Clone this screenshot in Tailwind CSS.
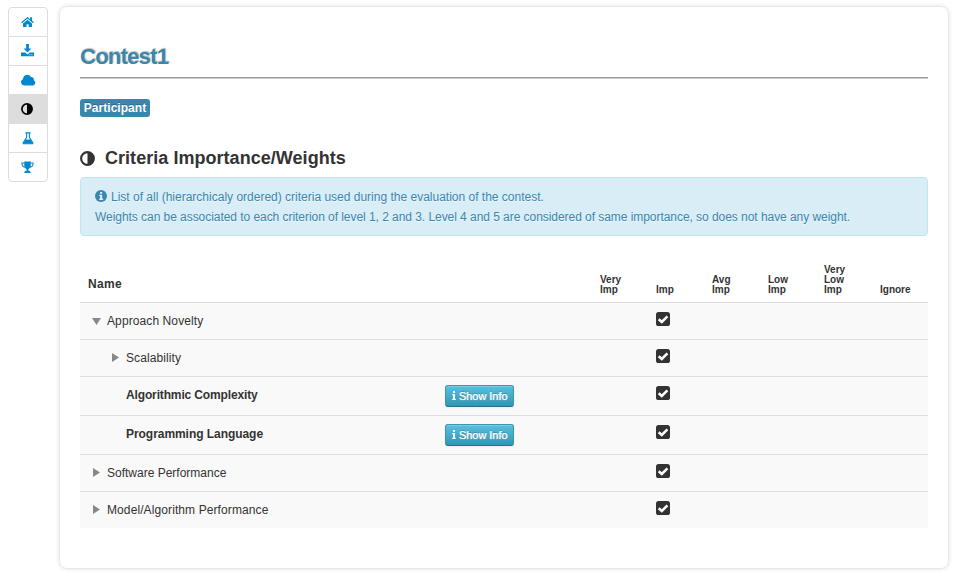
<!DOCTYPE html>
<html lang="en">
<head>
<meta charset="utf-8">
<title>Contest1</title>
<script src="https://cdn.jsdelivr.net/npm/@tailwindcss/browser@4"></script>
</head>
<body class="h-[576px] overflow-hidden bg-white font-['Liberation_Sans',Arial,sans-serif] text-[13px] leading-5 text-[#333]">
<svg class="hidden">
  <symbol id="home" viewBox="0 0 14 12"><path d="M7 3.6 11.8 7.6V11.5H8.2V8.3H6v3.2H2.2V7.6z"/><path d="M.6 6.9 7 1.5 13.4 6.9" fill="none" stroke="currentColor" stroke-width="1.4"/><path d="M9.9 1h2v4.6L9.9 4z"/></symbol>
  <symbol id="download" viewBox="0 0 14 13"><path d="M5.5 0h3v4.4h2.7L7 8.6 2.8 4.4h2.7z"/><path d="M0 8.4h4.6L7 10.6l2.4-2.2H14v3.8H0z"/><path d="M9 10.2h1v1H9zM11.3 10.2h1v1h-1z" fill="#fff"/></symbol>
  <symbol id="cloud" viewBox="0 0 15 12"><path d="M3.5 11.5A3.4 3.4 0 0 1 2.1 5 4.2 4.2 0 0 1 10 3a2.5 2.5 0 0 1 2.7 3.2 2.8 2.8 0 0 1-.6 5.3z"/></symbol>
  <symbol id="adjust" viewBox="0 0 12 12"><circle cx="6" cy="6" r="5.1" fill="none" stroke="currentColor" stroke-width="1.7"/><path d="M6 1a5 5 0 0 1 0 10z"/></symbol>
  <symbol id="beaker" viewBox="0 0 12 13"><path d="M3.4.9h5.2M4.6 1v4.3L1.3 10.6q-.6 1.2.6 1.2h8.2q1.2 0 .6-1.2L7.4 5.3V1" fill="none" stroke="currentColor" stroke-width="1.1"/><path d="M3.6 7.4h4.8l2.3 4H1.3z"/></symbol>
  <symbol id="trophy" viewBox="0 0 14 13"><path d="M3.5.6h7v3.6c0 2.2-1.5 3.2-2.5 4v1.6c1.4 0 2.4.7 2.4 1.6v.6H3.6v-.6c0-.9 1-1.6 2.4-1.6V8.2c-1-.8-2.5-1.8-2.5-4z"/><path d="M3.6 2H.9c0 2.6 1.4 4.1 4 4.1M10.4 2h2.7c0 2.6-1.4 4.1-4 4.1" fill="none" stroke="currentColor" stroke-width="1.1"/></symbol>
  <symbol id="info-sign" viewBox="0 0 12 12"><circle cx="6" cy="6" r="6"/><path d="M5 2h2.2v1.7H5zM4.2 4.7h3v3.8h.9V10H4.2V8.5H5V6.1h-.8z" fill="#d9edf7"/></symbol>
  <symbol id="info" viewBox="0 0 4 9"><path d="M1 0h2v2H1zM.3 3H3v4.7h.8V9H.2V7.7H1V4.3H.3z"/></symbol>
  <symbol id="check" viewBox="0 0 14 14"><rect width="14" height="14" rx="2.6"/><path d="M2.7 7.2 5.8 10 11.4 4.4" fill="none" stroke="#fff" stroke-width="2.5"/></symbol>
</svg>
<div class="flex items-start pl-2">
  <nav class="mt-[7px] flex h-[175px] w-10 flex-col divide-y divide-[#ddd] rounded border border-[#ddd] text-[#0088cc]">
    <a class="flex h-[29px] items-center justify-center pr-px"><svg class="h-3 w-[13px] fill-current"><use href="#home"/></svg></a>
    <a class="flex h-[29px] items-center justify-center pr-px pb-px"><svg class="h-[13px] w-[13px] fill-current" viewBox="0 0 14 13" preserveAspectRatio="none"><use href="#download" width="14" height="13"/></svg></a>
    <a class="flex h-[29px] items-center justify-center"><svg class="h-3 w-[15px] fill-current"><use href="#cloud"/></svg></a>
    <a class="flex h-[29px] items-center justify-center bg-[#ddd] pr-0.5 text-black"><svg class="size-3 fill-current"><use href="#adjust"/></svg></a>
    <a class="flex h-[29px] items-center justify-center"><svg class="h-[13px] w-3 fill-current"><use href="#beaker"/></svg></a>
    <a class="flex h-[28px] items-center justify-center pr-px"><svg class="h-[13px] w-[13px] fill-current" viewBox="0 0 14 13" preserveAspectRatio="none"><use href="#trophy" width="14" height="13"/></svg></a>
  </nav>
  <main class="mt-1.5 ml-[11px] h-[563px] w-[890px] rounded-lg border border-[#e8e8e8] px-5 shadow-[0_0_4px_rgba(0,0,0,0.12)]">
    <h1 class="mt-[34px] h-[37px] border-b border-[#999] pt-px text-[22px] leading-[30px] font-bold tracking-[-0.75px] text-[#3a87ad] shadow-[0_1px_0_#ccc] [text-shadow:1px_-1px_1px_#bbb]">Contest1</h1>
    <div class="mt-[21px] flex h-[18px] w-[70px] items-center justify-center rounded-[3px] bg-[#3a87ad] text-xs font-bold tracking-[0.05px] text-white [text-shadow:0_-1px_0_rgba(0,0,0,0.25)]">Participant</div>
    <h2 class="mt-[31px] flex h-5 items-center text-[18px] font-bold tracking-[0.04px]"><svg class="mr-[10px] size-[15px] fill-current"><use href="#adjust"/></svg>Criteria Importance/Weights</h2>
    <div class="mt-[9px] h-[59px] rounded border border-[#bce8f1] bg-[#d9edf7] px-3.5 pt-[9px] text-xs leading-5 text-[#3a87ad] [text-shadow:0_1px_0_rgba(255,255,255,0.5)]">
      <p class="flex items-center"><svg class="mr-1 mb-0.5 size-3 fill-current"><use href="#info-sign"/></svg>List of all (hierarchicaly ordered) criteria used during the evaluation of the contest.</p>
      <p class="tracking-[-0.05px]">Weights can be associated to each criterion of level 1, 2 and 3. Level 4 and 5 are considered of same importance, so does not have any weight.</p>
    </div>
    <table class="mt-[26px] w-full table-fixed border-collapse">
      <colgroup><col class="w-[357px]"><col class="w-[155px]"><col class="w-14"><col class="w-14"><col class="w-14"><col class="w-14"><col class="w-14"><col class="w-14"></colgroup>
      <thead><tr class="h-10 text-left align-bottom text-[10px] leading-[10px]">
        <th class="px-2 pb-2 text-xs leading-5 tracking-[0.3px]">Name</th><th></th>
        <th class="px-2 pb-[7px]">Very<br>Imp</th><th class="px-2 pb-[7px]">Imp</th><th class="px-2 pb-[7px]">Avg<br>Imp</th><th class="px-2 pb-[7px]">Low<br>Imp</th><th class="px-2 pb-[7px]">Very<br>Low<br>Imp</th><th class="px-2 pb-[7px]">Ignore</th>
      </tr></thead>
      <tbody class="align-top text-xs leading-5">
        <tr class="h-[37px] border-t border-[#ddd] bg-[#f9f9f9]">
          <td class="pt-2 pl-3"><div class="flex items-center tracking-[0.1px]"><svg class="mr-1.5 -mb-0.5 h-[7px] w-[9px] fill-[#888]" viewBox="0 0 9 7"><path d="M0 0h9L4.5 7z"/></svg>Approach Novelty</div></td><td></td><td></td>
          <td class="pt-[9px] pl-2"><svg class="size-3.5 fill-current"><use href="#check"/></svg></td><td></td><td></td><td></td><td></td>
        </tr>
        <tr class="h-[37px] border-t border-[#ddd] bg-[#f9f9f9]">
          <td class="pt-2 pl-8"><div class="flex items-center tracking-[0.1px]"><svg class="mr-[7px] mb-px h-[9px] w-[7px] fill-[#888]" viewBox="0 0 7 9"><path d="M0 0 7 4.5 0 9z"/></svg>Scalability</div></td><td></td><td></td>
          <td class="pt-[9px] pl-2"><svg class="size-3.5 fill-current"><use href="#check"/></svg></td><td></td><td></td><td></td><td></td>
        </tr>
        <tr class="h-[39px] border-t border-[#ddd] bg-[#f9f9f9]">
          <td class="pt-2 pl-[46px] font-bold tracking-[-0.14px]">Algorithmic Complexity</td>
          <td class="pt-2 pl-2"><button class="flex h-[22px] w-[69px] items-center gap-[3px] rounded-[3px] border border-[#3a96b3] border-b-[#24748c] bg-linear-to-b from-[#5bc0de] to-[#2f96b4] pl-1.5 text-[11px] tracking-[-0.05px] text-white shadow-[inset_0_1px_0_rgba(255,255,255,0.2),0_1px_2px_rgba(0,0,0,0.05)] [text-shadow:0_-1px_0_rgba(0,0,0,0.25),0_0_1px_#fff]"><svg class="h-[9px] w-1 fill-current"><use href="#info"/></svg>Show Info</button></td><td></td>
          <td class="pt-[9px] pl-2"><svg class="size-3.5 fill-current"><use href="#check"/></svg></td><td></td><td></td><td></td><td></td>
        </tr>
        <tr class="h-[39px] border-t border-[#ddd] bg-[#f9f9f9]">
          <td class="pt-2 pl-[46px] font-bold tracking-[-0.05px]">Programming Language</td>
          <td class="pt-2 pl-2"><button class="flex h-[22px] w-[69px] items-center gap-[3px] rounded-[3px] border border-[#3a96b3] border-b-[#24748c] bg-linear-to-b from-[#5bc0de] to-[#2f96b4] pl-1.5 text-[11px] tracking-[-0.05px] text-white shadow-[inset_0_1px_0_rgba(255,255,255,0.2),0_1px_2px_rgba(0,0,0,0.05)] [text-shadow:0_-1px_0_rgba(0,0,0,0.25),0_0_1px_#fff]"><svg class="h-[9px] w-1 fill-current"><use href="#info"/></svg>Show Info</button></td><td></td>
          <td class="pt-[9px] pl-2"><svg class="size-3.5 fill-current"><use href="#check"/></svg></td><td></td><td></td><td></td><td></td>
        </tr>
        <tr class="h-[37px] border-t border-[#ddd] bg-[#f9f9f9]">
          <td class="pt-2 pl-[13px]"><div class="flex items-center"><svg class="mr-[7px] mb-px h-[9px] w-[7px] fill-[#888]" viewBox="0 0 7 9"><path d="M0 0 7 4.5 0 9z"/></svg>Software Performance</div></td><td></td><td></td>
          <td class="pt-[9px] pl-2"><svg class="size-3.5 fill-current"><use href="#check"/></svg></td><td></td><td></td><td></td><td></td>
        </tr>
        <tr class="h-[37px] border-t border-[#ddd] bg-[#f9f9f9]">
          <td class="pt-2 pl-[13px]"><div class="flex items-center tracking-[0.1px]"><svg class="mr-[7px] mb-px h-[9px] w-[7px] fill-[#888]" viewBox="0 0 7 9"><path d="M0 0 7 4.5 0 9z"/></svg>Model/Algorithm Performance</div></td><td></td><td></td>
          <td class="pt-[9px] pl-2"><svg class="size-3.5 fill-current"><use href="#check"/></svg></td><td></td><td></td><td></td><td></td>
        </tr>
      </tbody>
    </table>
  </main>
</div>
</body>
</html>
